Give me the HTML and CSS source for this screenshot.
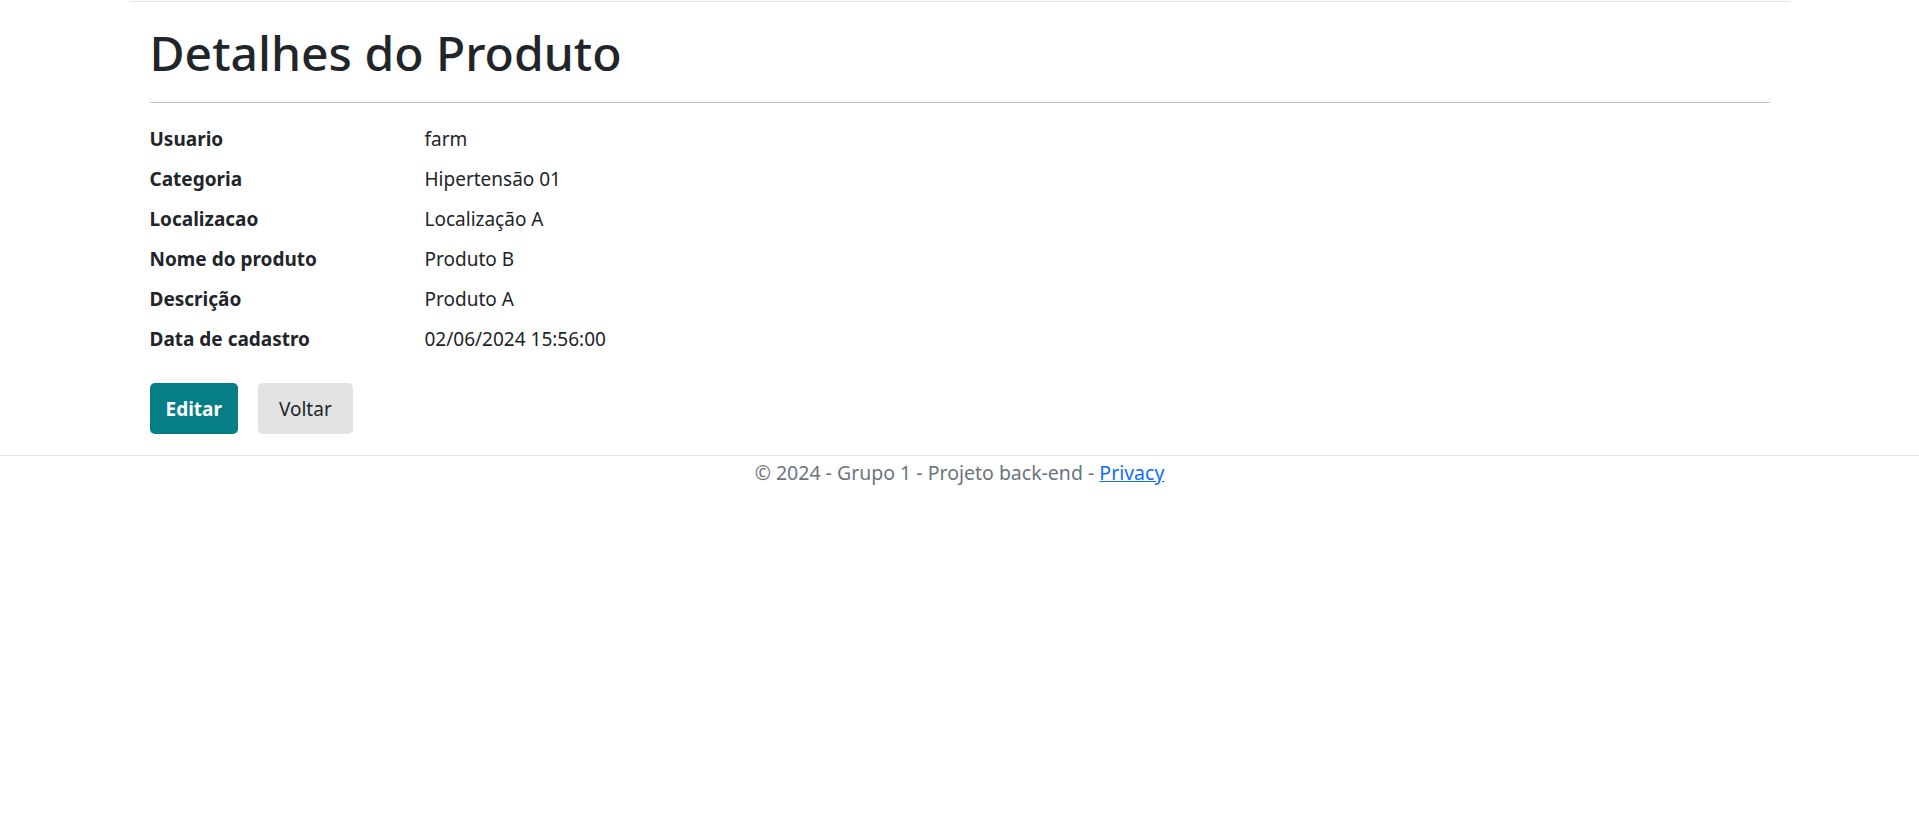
FILE: index.html
```html
<!DOCTYPE html>
<html lang="pt-BR">
<head>
<meta charset="utf-8">
<title>Detalhes do Produto</title>
<link rel="stylesheet" href="styles.css">
</head>
<body>
<header class="topbar"></header>
<main class="container">
  <h1 class="title">Detalhes do Produto</h1>
  <hr class="divider">
  <dl class="details">
    <dt>Usuario</dt><dd>farm</dd>
    <dt>Categoria</dt><dd>Hipertensão 01</dd>
    <dt>Localizacao</dt><dd>Localização A</dd>
    <dt>Nome do produto</dt><dd>Produto B</dd>
    <dt>Descrição</dt><dd>Produto A</dd>
    <dt>Data de cadastro</dt><dd>02/06/2024 15:56:00</dd>
  </dl>
  <div class="actions">
    <a class="btn btn-primary" href="#">Editar</a>
    <a class="btn btn-secondary" href="#">Voltar</a>
  </div>
</main>
<footer class="footer">
  &copy; 2024 - Grupo 1 - Projeto back-end - <a href="#" class="footer-link">Privacy</a>
</footer>
</body>
</html>
```

FILE: styles.css
```css
html, body {
  margin: 0;
  padding: 0;
  background: #ffffff;
}
body {
  font-family: "Noto Sans", "Open Sans", sans-serif;
  font-size: 19px;
  line-height: 30px;
  color: #212529;
}
.topbar {
  width: 1660px;
  margin: 0 auto;
  height: 1px;
  border-bottom: 1px solid #e5e5e5;
}
.container {
  width: 1620px;
  margin: 0 auto;
  padding: 0 20px;
}
.title {
  margin: 22px 0 0;
  font-size: 48px;
  line-height: 57px;
  font-weight: 500;
  color: #212529;
}
.divider {
  margin: 21px 0 21px;
  border: 0;
  border-top: 1px solid #c4c4c4;
  height: 0;
}
.details {
  display: grid;
  grid-template-columns: 275px 1fr;
  margin: 0;
}
.details dt {
  font-weight: 700;
  margin: 0 0 10px;
}
.details dd {
  margin: 0 0 10px;
}
.actions {
  display: flex;
  gap: 20px;
  margin-top: 19px;
  padding-bottom: 21px;
}
.btn {
  display: inline-flex;
  align-items: center;
  justify-content: center;
  height: 51px;
  padding: 0 16px;
  border-radius: 5px;
  text-decoration: none;
  box-sizing: border-box;
}
.btn-primary {
  background: #057e86;
  color: #ffffff;
  font-weight: 700;
}
.btn-secondary {
  background: #e3e3e3;
  color: #212529;
  padding: 0 21px;
}
.footer {
  border-top: 1px solid #e5e5e5;
  text-align: center;
  color: #6c757d;
  font-size: 19.5px;
  line-height: 34px;
}
.footer-link {
  color: #0d6efd;
  text-decoration: underline;
}
```
